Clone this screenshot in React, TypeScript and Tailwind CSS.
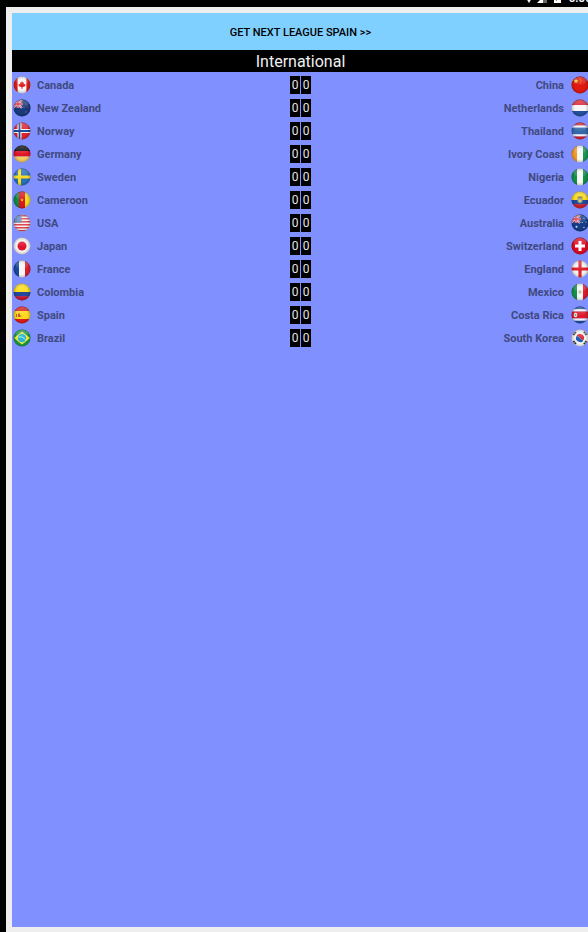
import React from "react";

type Draw = () => React.ReactNode;

const across = (...colors: string[]): Draw => () => {
  const w = 18 / colors.length;
  return colors.map((c, i) => <rect key={i} x={i * w} y="0" width={w + 0.1} height="18" fill={c} />);
};

const down = (...bands: [string, number, number][]): Draw => () =>
  bands.map(([c, y, h], i) => <rect key={i} x="0" y={y} width="18" height={h} fill={c} />);

const Union = () => (
  <g>
    <path d="M0 1L9 9M9 1L0 9" stroke="#e8d5df" strokeWidth="1.8" />
    <path d="M0 1L9 9M9 1L0 9" stroke="#d8283c" strokeWidth="0.7" />
    <path d="M5 0V9M0 5H9.500" stroke="#f0dfe6" strokeWidth="2.4" />
    <path d="M5 0V9M0 5H9.500" stroke="#e02236" strokeWidth="1.3" />
  </g>
);

const flags: Record<string, Draw> = {
  Canada: () => (
    <g>
      <rect width="18" height="18" fill="#f6f4f4" />
      <rect width="4.6" height="18" fill="#dc1c1c" />
      <rect x="13.400" width="4.600" height="18" fill="#dc1c1c" />
      <path d="M9 5L10 6.800L11 6.400L10.800 8.300L12.600 8L12 9.500L12.500 10L9.400 11.200V13H8.600V11.200L5.500 10L6 9.500L5.400 8L7.200 8.300L7 6.400L8 6.800Z" fill="#e02020" />
    </g>
  ),
  "New Zealand": () => (
    <g>
      <rect width="18" height="18" fill="#173a7c" />
      <Union />
      <g fill="#c85878">
        <circle cx="13" cy="5" r="0.6" />
        <circle cx="11" cy="8.500" r="0.6" />
        <circle cx="15" cy="8" r="0.6" />
        <circle cx="13" cy="13" r="0.7" />
      </g>
    </g>
  ),
  Norway: () => (
    <g>
      <rect width="18" height="18" fill="#dc2430" />
      <path d="M6.500 0V18M0 9H18" stroke="#f4f4f8" strokeWidth="4" />
      <path d="M6.500 0V18M0 9H18" stroke="#1c4c94" strokeWidth="1.800" />
    </g>
  ),
  Germany: down(["#080808", 0, 6], ["#e01428", 6, 5.5], ["#f4cc60", 11.5, 6.5]),
  Sweden: () => (
    <g>
      <rect width="18" height="18" fill="#2870b8" />
      <path d="M6.500 0V18M0 9H18" stroke="#f8dc24" strokeWidth="3" />
    </g>
  ),
  Cameroon: () => (
    <g>
      {across("#128c40", "#dc1420", "#f4dc20")()}
      <path d="M9 7.200L9.500 8.500H10.800L9.800 9.300L10.200 10.600L9 9.800L7.800 10.600L8.200 9.300L7.200 8.500H8.500Z" fill="#f8d820" />
    </g>
  ),
  USA: () => (
    <g>
      <rect width="18" height="18" fill="#f4f0f0" />
      {[1, 4, 7, 10, 13, 16].map((y) => (
        <rect key={y} y={y} width="18" height="1.500" fill="#e04450" />
      ))}
      <rect width="8.500" height="8.500" fill="#5880b8" />
      <path d="M2 3H8M2 5H8M2 7H8" stroke="#d0e0f0" strokeWidth="0.6" strokeDasharray="0.8 1" />
    </g>
  ),
  Japan: () => (
    <g>
      <rect width="18" height="18" fill="#f6f6f6" />
      <circle cx="9" cy="9" r="4.500" fill="#e01430" />
    </g>
  ),
  France: across("#1848a0", "#f6f6f6", "#dc1c2c"),
  Colombia: down(["#fadc18", 0, 9], ["#24489c", 9, 4.2], ["#c81830", 13.2, 4.8]),
  Spain: () => (
    <g>
      {down(["#dc1c18", 0, 5], ["#fad820", 5, 8], ["#dc1c18", 13, 5])()}
      <path d="M3 8H4V11H3ZM5 7.500H7V11H5ZM7.500 9H8.200V11H7.500Z" fill="#c85828" />
    </g>
  ),
  Brazil: () => (
    <g>
      <rect width="18" height="18" fill="#1c9c48" />
      <path d="M9 2.500L17 9L9 15.500L1 9Z" fill="#f0e838" />
      <circle cx="9" cy="9" r="4.200" fill="#28b4d0" />
      <path d="M5.300 8Q9 6.800 12.500 10.500" stroke="#c8f0f0" strokeWidth="0.9" fill="none" />
    </g>
  ),
  China: () => (
    <g>
      <rect width="18" height="18" fill="#e01810" />
      <path d="M5 2.500L5.700 4.300H7.500L6.100 5.400L6.600 7.200L5 6.100L3.400 7.200L3.900 5.400L2.500 4.300H4.300Z" fill="#fce020" />
      <g fill="#f4b020">
        <circle cx="9" cy="3" r="0.5" />
        <circle cx="10" cy="5" r="0.5" />
        <circle cx="9.500" cy="7" r="0.5" />
      </g>
    </g>
  ),
  Netherlands: down(["#dc2430", 0, 6], ["#f6f6f6", 6, 6], ["#24509c", 12, 6]),
  Thailand: down(["#d82028", 0, 3.5], ["#f2f2f4", 3.5, 2.2], ["#3468a8", 5.7, 6.6], ["#f2f2f4", 12.3, 2.2], ["#d82028", 14.5, 3.5]),
  "Ivory Coast": across("#f49828", "#f6f6f4", "#189850"),
  Nigeria: across("#129048", "#f6f6f4", "#129048"),
  Ecuador: () => (
    <g>
      {down(["#fadc18", 0, 9], ["#24489c", 9, 4.2], ["#d02028", 13.2, 4.8])()}
      <ellipse cx="9" cy="9" rx="2.600" ry="3.200" fill="#88a890" />
      <path d="M5.500 6Q9 4.500 12.500 6L9 7.500Z" fill="#98783c" />
      <circle cx="9" cy="9.500" r="1.300" fill="#e8d068" />
    </g>
  ),
  Australia: () => (
    <g>
      <rect width="18" height="18" fill="#143c88" />
      <Union />
      <g fill="#d8e4f4">
        <circle cx="5.500" cy="12.800" r="1" />
        <circle cx="13" cy="4.500" r="0.600" />
        <circle cx="11.200" cy="8.500" r="0.600" />
        <circle cx="15" cy="8" r="0.600" />
        <circle cx="13" cy="13.500" r="0.700" />
      </g>
    </g>
  ),
  Switzerland: () => (
    <g>
      <rect width="18" height="18" fill="#dc0c24" />
      <path d="M9 4V14M4 9H14" stroke="#ffffff" strokeWidth="3" />
    </g>
  ),
  England: () => (
    <g>
      <rect width="18" height="18" fill="#f4f4f4" />
      <path d="M9 0V18M0 9H18" stroke="#e02028" strokeWidth="3.200" />
    </g>
  ),
  Mexico: () => (
    <g>
      {across("#129048", "#f6f6f4", "#dc1c2c")()}
      <circle cx="9" cy="9" r="1.700" fill="#b8c8a0" />
    </g>
  ),
  "Costa Rica": () => (
    <g>
      {down(["#1c50a0", 0, 3.2], ["#f4f4f4", 3.2, 2.3], ["#dc1c2c", 5.5, 7], ["#f4f4f4", 12.5, 2.3], ["#1c50a0", 14.8, 3.2])()}
      <ellipse cx="4.500" cy="9" rx="1.800" ry="2.200" fill="#e8ece8" />
      <circle cx="4.500" cy="9" r="0.900" fill="#709898" />
    </g>
  ),
  "South Korea": () => (
    <g>
      <rect width="18" height="18" fill="#f4f4f4" />
      <path d="M5.200 7.600A4 4 0 0 1 12.800 10.400Q11.500 12 9 9Q6.500 6 5.200 7.600Z" fill="#e02838" />
      <path d="M12.800 10.400A4 4 0 0 1 5.200 7.600Q6.500 6 9 9Q11.500 12 12.800 10.400Z" fill="#2060b0" />
      <path d="M2.500 6L5 2.800M13 2.800L15.500 6M2.500 12L5 15.200M13 15.200L15.500 12" stroke="#383838" strokeWidth="2" strokeDasharray="1.600 0.600" />
    </g>
  ),
};

const matches: [string, string][] = [
  ["Canada", "China"],
  ["New Zealand", "Netherlands"],
  ["Norway", "Thailand"],
  ["Germany", "Ivory Coast"],
  ["Sweden", "Nigeria"],
  ["Cameroon", "Ecuador"],
  ["USA", "Australia"],
  ["Japan", "Switzerland"],
  ["France", "England"],
  ["Colombia", "Mexico"],
  ["Spain", "Costa Rica"],
  ["Brazil", "South Korea"],
];

function Flag({ country }: { country: string }) {
  return (
    <svg viewBox="0 0 18 18" className="size-[18px] shrink-0" aria-hidden="true">
      <g clipPath="url(#ball)">
        {flags[country]()}
        <rect width="18" height="18" fill="url(#shade)" />
        <ellipse cx="9" cy="5" rx="6.500" ry="4" fill="url(#gloss)" />
      </g>
    </svg>
  );
}

function FlagDefs() {
  return (
    <svg width="0" height="0" className="absolute" aria-hidden="true">
      <defs>
        <clipPath id="ball">
          <circle cx="9" cy="9" r="8.500" />
        </clipPath>
        <radialGradient id="shade">
          <stop offset="0.6" stopColor="#000" stopOpacity="0" />
          <stop offset="0.85" stopColor="#000" stopOpacity="0.15" />
          <stop offset="1" stopColor="#000" stopOpacity="0.45" />
        </radialGradient>
        <linearGradient id="gloss" x1="0" y1="0" x2="0" y2="1">
          <stop offset="0" stopColor="#fff" stopOpacity="0.25" />
          <stop offset="1" stopColor="#fff" stopOpacity="0.05" />
        </linearGradient>
      </defs>
    </svg>
  );
}

function StatusBar() {
  return (
    <header className="flex h-[7px] items-start justify-end overflow-hidden bg-black text-white">
      <svg viewBox="0 0 38 7" className="h-[7px] w-[38px] shrink-0" aria-hidden="true">
        <path d="M0 -2H6L3 3Z" fill="#fff" />
        <path d="M11 3L17 -3V3Z" fill="#fff" />
        <path d="M17 -3H21V3H17Z" fill="#666" />
        <path d="M28 -6H35V3H28Z" fill="#fff" />
        <path d="M32 -2L30 1" stroke="#777" />
      </svg>
      <span className="-mt-[11px] -mr-1 ml-1 text-[12px] leading-[18px] font-medium">6:00</span>
    </header>
  );
}

function Score({ value }: { value: number }) {
  return (
    <span className="flex h-[18px] w-[10px] items-center justify-center bg-black text-[12px] leading-[18px] text-[#e4e4e4]">
      {value}
    </span>
  );
}

export default function App() {
  return (
    <div className="flex min-h-screen flex-col overflow-hidden bg-black font-[Roboto,sans-serif]">
      <FlagDefs />
      <StatusBar />
      <div className="ml-1.5 flex flex-1 flex-col bg-[#eeeeee] pt-1.5 pb-[5px] pl-1.5">
        <main className="-mr-px flex flex-1 flex-col bg-[#8091ff]">
          <button type="button" className="h-[37px] bg-[#80d0ff] pt-[3px] text-[11px] font-medium text-black">
            {"GET NEXT LEAGUE SPAIN >>"}
          </button>
          <h1 className="h-[22px] bg-black text-center text-[16px] leading-[24px] text-[#f0f0f0]">International</h1>
          <ul className="flex flex-col pt-px">
            {matches.map(([home, away]) => (
              <li key={home} className="grid h-[23px] grid-cols-[1fr_auto_1fr] items-center text-[11px] leading-[18px] font-bold text-[#40497f]">
                <div className="flex items-center gap-[6px] pl-px">
                  <Flag country={home} />
                  <span className="pt-[3px]">{home}</span>
                </div>
                <div className="flex gap-px font-normal">
                  <Score value={0} />
                  <Score value={0} />
                </div>
                <div className="flex items-center justify-end gap-[7px]">
                  <span className="pt-[3px]">{away}</span>
                  <Flag country={away} />
                </div>
              </li>
            ))}
          </ul>
        </main>
      </div>
    </div>
  );
}
